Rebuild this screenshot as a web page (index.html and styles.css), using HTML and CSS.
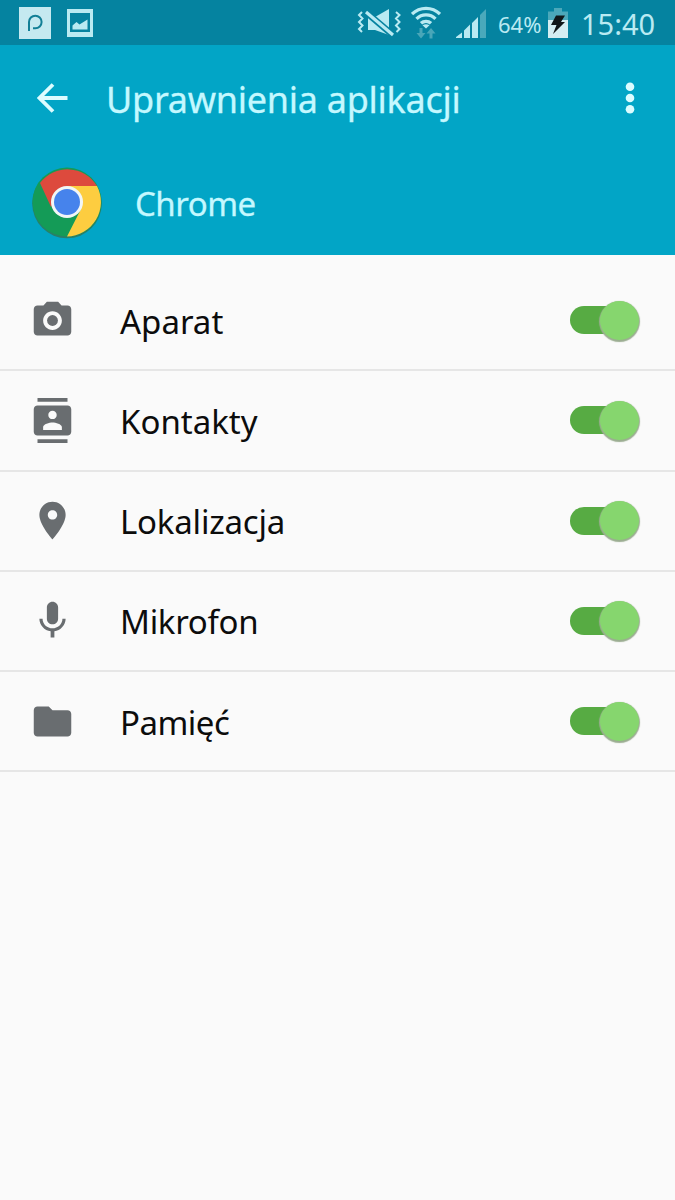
FILE: index.html
```html
<!DOCTYPE html>
<html lang="pl">
  <head>
    <meta charset="UTF-8" />
    <meta name="viewport" content="width=device-width, initial-scale=1.0" />
    <title>Uprawnienia aplikacji</title>
    <link rel="stylesheet" href="styles.css">
  </head>
  <body>
    <!-- Status Bar -->
    <div class="status-bar">
      <svg class="icon-app" width="32" height="32" viewBox="0 0 32 32">
        <rect width="32" height="32" fill="#c5e9f0" />
        <path d="M10 24V15a6.300 6.300 0 1 1 6.300 6.300H14" fill="none" stroke="#127f96" stroke-width="2" />
      </svg>
      <svg class="icon-picture" width="26" height="28" viewBox="0 0 26 28">
        <path d="M0 0h26v28H0zM3 4v19h20V4z" fill="#b9eaf2" fill-rule="evenodd" />
        <path d="M5.500 20.500v-4l4-3.500 3 2.500 8-5v10z" fill="#b9eaf2" />
      </svg>
      <svg class="icon-mute" width="44" height="28" viewBox="0 0 44 28">
        <path d="M11 8h7L32 0v26l-14-5h-7z" fill="#b9eaf2" />
        <path d="M7 1.500l30 25.500" stroke="#0583a0" stroke-width="6.500" />
        <path d="M9 3l27 23" stroke="#b9eaf2" stroke-width="3.200" />
        <path d="M5 3L2 6l3.500 3.500L2 13l3.500 3.500L2 20l3 3M39 3l3.500 3L39 9.500l3.500 3.500-3.500 3.500 3.500 3.500-3 3" fill="none" stroke="#b9eaf2" stroke-width="2" />
      </svg>
      <svg class="icon-wifi" width="30" height="34" viewBox="0 0 30 34">
        <path d="M1 9a20 20 0 0 1 28 0M5.500 13.800a13.500 13.500 0 0 1 19 0M10 18.300a7.200 7.200 0 0 1 10 0" fill="none" stroke="#b9eaf2" stroke-width="3.300" />
        <path d="M11.500 20.200q3.500-2 7 0L15 23.500z" fill="#b9eaf2" />
        <path d="M8.500 23h3v5h3L10 33.500 5.500 28h3zM18.500 33.500h3v-5h3L20 23l-4.500 5.500h3z" fill="#49a6b8" />
      </svg>
      <svg class="icon-signal" width="32" height="30" viewBox="0 0 32 30">
        <path d="M0 30v-1l6-4.500V30zM8 30v-7.500l6-6V30zM16 30V15l6-6v21z" fill="#b9eaf2" />
        <path d="M24 30V7l6-6v29z" fill="#4aa9bb" />
      </svg>
      <span class="battery-level">64%</span>
      <svg class="icon-battery" width="20" height="30" viewBox="0 0 20 30">
        <path d="M0 3.500h6V0h8v3.500h6V12H0z" fill="#4ba8ba" />
        <path d="M0 12h20v18H0z" fill="#d4eef2" />
        <path d="M8 7.500h9l-4 6.500h4L5 26l3.500-9H3z" fill="#101719" />
      </svg>
      <span class="clock">15:40</span>
    </div>

    <!-- Header -->
    <header class="header">
      <div class="toolbar">
        <svg class="icon-back" width="32" height="30" viewBox="0 0 32 30">
          <path d="M30.500 15H3M16 1.500L2.500 15 16 28.500" fill="none" stroke="#dcfcff" stroke-width="3.800" />
        </svg>
        <h1 class="title">Uprawnienia aplikacji</h1>
        <svg class="icon-menu" width="10" height="32" viewBox="0 0 10 32">
          <circle cx="5" cy="4.700" r="4.300" fill="#dcfcff" />
          <circle cx="5" cy="16" r="4.300" fill="#dcfcff" />
          <circle cx="5" cy="27.300" r="4.300" fill="#dcfcff" />
        </svg>
      </div>
      <div class="app">
        <svg class="icon-chrome" width="70" height="72" viewBox="0 0 70 72">
          <circle cx="35" cy="36.500" r="34.800" fill="#297f67" />
          <circle cx="35" cy="35" r="34.500" fill="#149b57" />
          <path d="M8 16A34.500 34.500 0 0 1 65 19H35L19 40z" fill="#dd4a3d" />
          <path d="M35 19h30a34.500 34.500 0 0 1-30 50.500L49 42z" fill="#fdcd40" />
          <circle cx="35" cy="35" r="16" fill="#f2f6f5" />
          <circle cx="35" cy="35" r="13" fill="#4683ec" />
        </svg>
        <span class="app-name">Chrome</span>
      </div>
    </header>

    <!-- Permission List -->
    <main class="permissions">
      <div class="permission">
        <svg class="permission-icon" viewBox="0 0 24 24">
          <circle cx="12" cy="12" r="2.900" />
          <path fill-rule="evenodd" d="M9 2L7.170 4H4c-1.100 0-2 .9-2 2v12c0 1.100.9 2 2 2h16c1.100 0 2-.9 2-2V6c0-1.100-.9-2-2-2h-3.170L15 2H9zm3 15c-2.760 0-5-2.240-5-5s2.240-5 5-5 5 2.240 5 5-2.240 5-5 5z" />
        </svg>
        <span class="permission-name camera">Aparat</span>
        <span class="switch"><span class="thumb"></span></span>
      </div>
      <div class="permission">
        <svg class="permission-icon" viewBox="0 0 24 24">
          <path d="M20 0H4v2h16V0zM4 24h16v-2H4v2zM20 4H4c-1.100 0-2 .9-2 2v12c0 1.100.9 2 2 2h16c1.100 0 2-.9 2-2V6c0-1.100-.9-2-2-2zm-8 2.750c1.240 0 2.250 1.010 2.250 2.250s-1.010 2.250-2.250 2.250S9.750 10.240 9.750 9 10.760 6.750 12 6.750zM17 17H7v-1.500c0-1.670 3.330-2.500 5-2.500s5 .83 5 2.500V17z" />
        </svg>
        <span class="permission-name contacts">Kontakty</span>
        <span class="switch"><span class="thumb"></span></span>
      </div>
      <div class="permission">
        <svg class="permission-icon" viewBox="0 0 24 24">
          <path d="M12 2C8.130 2 5 5.130 5 9c0 5.250 7 13 7 13s7-7.750 7-13c0-3.870-3.130-7-7-7zm0 9.500c-1.380 0-2.500-1.120-2.500-2.500s1.120-2.500 2.500-2.500 2.500 1.120 2.500 2.500-1.120 2.500-2.500 2.500z" />
        </svg>
        <span class="permission-name location">Lokalizacja</span>
        <span class="switch"><span class="thumb"></span></span>
      </div>
      <div class="permission">
        <svg class="permission-icon" viewBox="0 0 24 24">
          <path d="M12 14c1.660 0 2.990-1.340 2.990-3L15 5c0-1.660-1.340-3-3-3S9 3.340 9 5v6c0 1.660 1.340 3 3 3zm5.300-3c0 3-2.540 5.100-5.300 5.100S6.700 14 6.700 11H5c0 3.410 2.720 6.230 6 6.720V21h2v-3.280c3.280-.48 6-3.300 6-6.720h-1.700z" />
        </svg>
        <span class="permission-name microphone">Mikrofon</span>
        <span class="switch"><span class="thumb"></span></span>
      </div>
      <div class="permission">
        <svg class="permission-icon" viewBox="0 0 24 24">
          <path d="M10 4H4c-1.100 0-1.990.9-1.990 2L2 18c0 1.100.9 2 2 2h16c1.100 0 2-.9 2-2V8c0-1.100-.9-2-2-2h-8l-2-2z" />
        </svg>
        <span class="permission-name storage">Pamięć</span>
        <span class="switch"><span class="thumb"></span></span>
      </div>
    </main>
  </body>
</html>
```
FILE: styles.css
```css
* {
  box-sizing: border-box;
}

body {
  margin: 0;
  min-height: 1200px;
  font-family: "Noto Sans", sans-serif;
  background-color: #fafafa;
  color: #0c0c0c;
}

svg {
  display: block;
  flex-shrink: 0;
}

/* Status Bar */
.status-bar {
  display: flex;
  align-items: flex-start;
  height: 45px;
  background-color: #0583a0;
  color: #b9eaf2;
  white-space: nowrap;
}
.icon-app {
  margin: 7px 0 0 19px;
}
.icon-picture {
  margin: 9px 0 0 16px;
}
.icon-mute {
  margin: 9px 0 0 264px;
}
.icon-wifi {
  margin: 5px 0 0 10px;
}
.icon-signal {
  margin: 8px 0 0 15px;
}
.battery-level {
  width: 45px;
  margin: 7px 0 0 10px;
  font-size: 22px;
  line-height: 34px;
}
.icon-battery {
  margin: 8px 0 0 5px;
}
.clock {
  margin: 4px 0 0 13px;
  font-size: 29px;
  line-height: 40px;
}

/* Header */
.header {
  height: 210px;
  background-color: #02a5c6;
  color: #c4f8ff;
}
.toolbar {
  display: flex;
  align-items: center;
  height: 106px;
  padding: 0 40px 0 37px;
}
.title {
  flex: 1;
  margin: 4px 0 0 37px;
  font-size: 36px;
  font-weight: 400;
  line-height: 50px;
  letter-spacing: -0.27px;
  white-space: nowrap;
  -webkit-text-stroke: 0.3px #c4f8ff;
}
.app {
  display: flex;
  align-items: center;
  height: 104px;
  padding-left: 32px;
}
.app-name {
  margin: 2px 0 0 33px;
  font-size: 33px;
  line-height: 46px;
  letter-spacing: -0.5px;
  -webkit-text-stroke: 0.3px #c4f8ff;
}

/* Permission List */
.permissions {
  padding-top: 16px;
}
.permission {
  display: flex;
  align-items: center;
  height: 100.25px;
  padding: 0 36px 0 30px;
  border-bottom: 2px solid #e6e6e6;
}
.permission-icon {
  width: 45px;
  height: 45px;
  fill: #696d70;
}
.permission-name {
  flex: 1;
  margin: 3px 0 0 45px;
  font-size: 33px;
  line-height: 46px;
}
.location {
  letter-spacing: -0.2px;
}
.microphone {
  letter-spacing: -0.3px;
}
.storage {
  letter-spacing: -0.5px;
}

/* Switch */
.switch {
  display: flex;
  align-items: center;
  justify-content: flex-end;
  width: 69px;
  height: 28px;
  border-radius: 14px;
  background: linear-gradient(to right, #57ab43 55px, transparent 55px);
}
.thumb {
  width: 39px;
  height: 39px;
  flex-shrink: 0;
  border-radius: 50%;
  background-color: #86d66e;
  box-shadow: 0 1px 1px 1px #9bad91;
}
```
